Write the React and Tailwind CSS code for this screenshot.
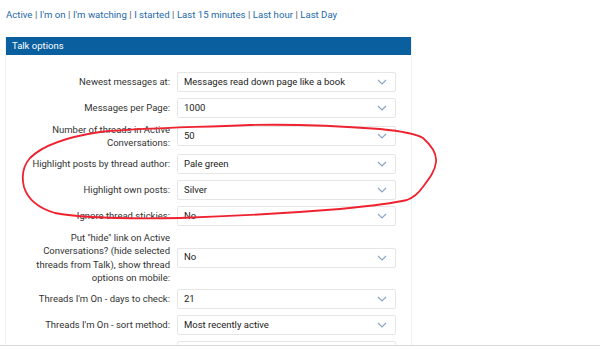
const links = ['Active', "I'm on", "I'm watching", 'I started', 'Last 15 minutes', 'Last hour', 'Last Day']

const rows = [
  { label: 'Newest messages at:', value: 'Messages read down page like a book' },
  { label: 'Messages per Page:', value: '1000' },
  { label: 'Number of threads in Active Conversations:', value: '50' },
  { label: 'Highlight posts by thread author:', value: 'Pale green' },
  { label: 'Highlight own posts:', value: 'Silver' },
  { label: 'Ignore thread stickies:', value: 'No' },
  {
    label: 'Put "hide" link on Active Conversations? (hide selected threads from Talk), show thread options on mobile:',
    value: 'No',
  },
  { label: "Threads I'm On - days to check:", value: '21' },
  { label: "Threads I'm On - sort method:", value: 'Most recently active' },
  { label: "Threads I'm On - show replies:", value: 'Yes' },
]

function Select({ value }) {
  return (
    <div className="flex h-[20px] w-[219px] items-center justify-between rounded-[2px] border border-[#e6e6e6] bg-white pl-[6px] pr-[8px]">
      <span className="text-[9.5px] text-[#222]">{value}</span>
      <svg width="10" height="6" viewBox="0 0 10 6" className="text-[#8ea6c6]">
        <polyline points="1,1 5,5 9,1" fill="none" stroke="currentColor" strokeWidth="1.2" />
      </svg>
    </div>
  )
}

export default function App() {
  return (
    <div className="relative h-[350px] w-[600px] overflow-hidden bg-white font-['Roboto',sans-serif]">
      {/* quick filter links */}
      <div className="flex items-center pl-[6px] pt-[8px] text-[9.6px] leading-[14px]">
        {links.map((l, i) => (
          <span key={l} className="flex items-center">
            {i > 0 && <span className="px-[2.5px] text-[#555]">|</span>}
            <a className="text-[#2369a8]">{l}</a>
          </span>
        ))}
      </div>

      {/* options panel */}
      <div className="ml-[5px] mt-[15px] w-[407px] border-x border-[#edf1f5]">
        <div className="flex h-[18px] items-center bg-[#0a5f9f] pl-[6px] text-[9.5px] text-white">Talk options</div>
        <div className="pt-[14px]">
          {rows.map((r) => (
            <div key={r.label} className="flex items-center">
              <div className="w-[165px] py-[1.5px] pl-[5px] pr-[1px] text-right text-[9.5px] leading-[13.5px] text-[#333]">
                {r.label}
              </div>
              <div className="ml-[6px] py-[3px]">
                <Select value={r.value} />
              </div>
            </div>
          ))}
        </div>
      </div>

      {/* red hand-drawn annotation */}
      <svg className="pointer-events-none absolute left-0 top-0" width="600" height="350">
        <path
          d="M100 132 C140 128 170 128 250 125 C300 124 340 126 380 129 C400 131 415 133 423 138 C432 146 437 154 436 162 C435 172 428 180 422 188 C418 194 412 198 407 200 C390 204 370 206 340 209 C290 213 240 216 180 218 C120 219 80 218 55 213 C38 208 28 200 24 187 C21 175 24 165 30 158 C40 148 60 138 100 132 Z"
          fill="none"
          stroke="#ef2230"
          strokeWidth="1.8"
        />
      </svg>

      {/* bottom edge */}
      <div className="absolute bottom-0 left-0 h-[5px] w-full border-t border-[#d9d9d9] bg-white" />
    </div>
  )
}
